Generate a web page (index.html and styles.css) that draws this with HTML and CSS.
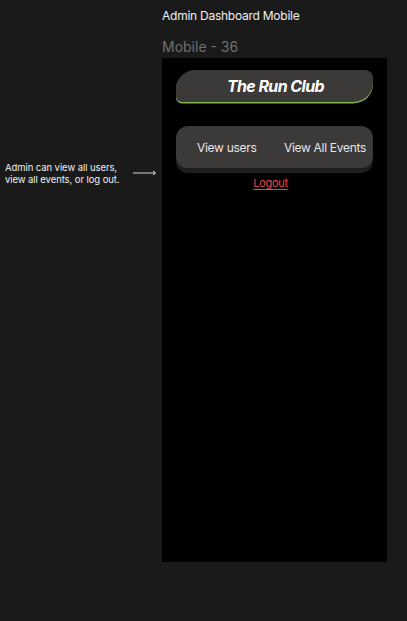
FILE: index.html
```html
<!DOCTYPE html>
<html>
<head>
<meta charset="utf-8">
<link rel="stylesheet" href="styles.css">
</head>
<body>
<div class="canvas">
  <div class="page-title">Admin Dashboard Mobile</div>
  <div class="frame-label">Mobile - 36</div>
  <div class="note">
    <p class="note-text">Admin can view all users,<br>view all events, or log out.</p>
    <svg class="arrow" width="24" height="6" viewBox="0 0 24 6"><path d="M0 3H22.5M20 1L22.5 3L20 5" fill="none" stroke="#e8e8e8" stroke-width="0.9"/></svg>
  </div>
  <div class="frame">
    <div class="brand">The Run Club</div>
    <div class="actions">
      <span class="action">View users</span>
      <span class="action">View All Events</span>
    </div>
    <a class="logout" href="#">Logout</a>
  </div>
</div>
</body>
</html>
```

FILE: styles.css
```css
html, body {
  margin: 0;
  padding: 0;
  background: #1a1a1a;
  font-family: Inter, "Noto Sans", sans-serif;
}
.canvas {
  position: relative;
  width: 407px;
  height: 621px;
  overflow: hidden;
}
.page-title {
  position: absolute;
  left: 162px;
  top: 8px;
  font-size: 12px;
  letter-spacing: -0.25px;
  color: #f0f0f0;
  line-height: 16px;
}
.frame-label {
  position: absolute;
  left: 162px;
  top: 38px;
  font-size: 14px;
  color: #6f6f6f;
  line-height: 18px;
}
.note {
  position: absolute;
  left: 5px;
  top: 162px;
  display: flex;
  align-items: center;
  gap: 13px;
}
.note-text {
  margin: 0;
  font-size: 9.5px;
  letter-spacing: -0.08px;
  line-height: 12px;
  color: #f0f0f0;
}
.arrow {
  display: block;
  margin-top: -2px;
}
.frame {
  position: absolute;
  left: 162px;
  top: 58px;
  width: 225px;
  height: 504px;
  background: #000;
  display: flex;
  flex-direction: column;
  align-items: center;
  box-sizing: border-box;
  padding-top: 12px;
}
.brand {
  width: 197px;
  height: 32px;
  background: #3c3939;
  border-radius: 20px 8px 20px 6px / 18px 8px 19px 6px;
  box-shadow: 0 1.5px 0 #7fb548;
  display: flex;
  align-items: center;
  justify-content: center;
  color: #fff;
  font-weight: 700;
  font-style: italic;
  font-size: 16px;
  letter-spacing: -0.6px;
  padding-left: 2px;
  box-sizing: border-box;
}
.actions {
  margin-top: 24px;
  width: 197px;
  height: 42px;
  background: #3c3939;
  border-radius: 12px;
  box-shadow: 0 5px 0 #1f1d1d;
  display: flex;
  align-items: center;
  justify-content: space-between;
  padding: 0 7px 0 21px;
  box-sizing: border-box;
}
.action {
  color: #e6e6e6;
  font-size: 12px;
  letter-spacing: -0.3px;
}
.logout {
  margin-top: 8px;
  color: #e5484d;
  font-size: 11px;
  letter-spacing: -0.3px;
  line-height: 14px;
  text-decoration: underline;
  text-underline-offset: 2px;
  margin-left: -8px;
}
```
